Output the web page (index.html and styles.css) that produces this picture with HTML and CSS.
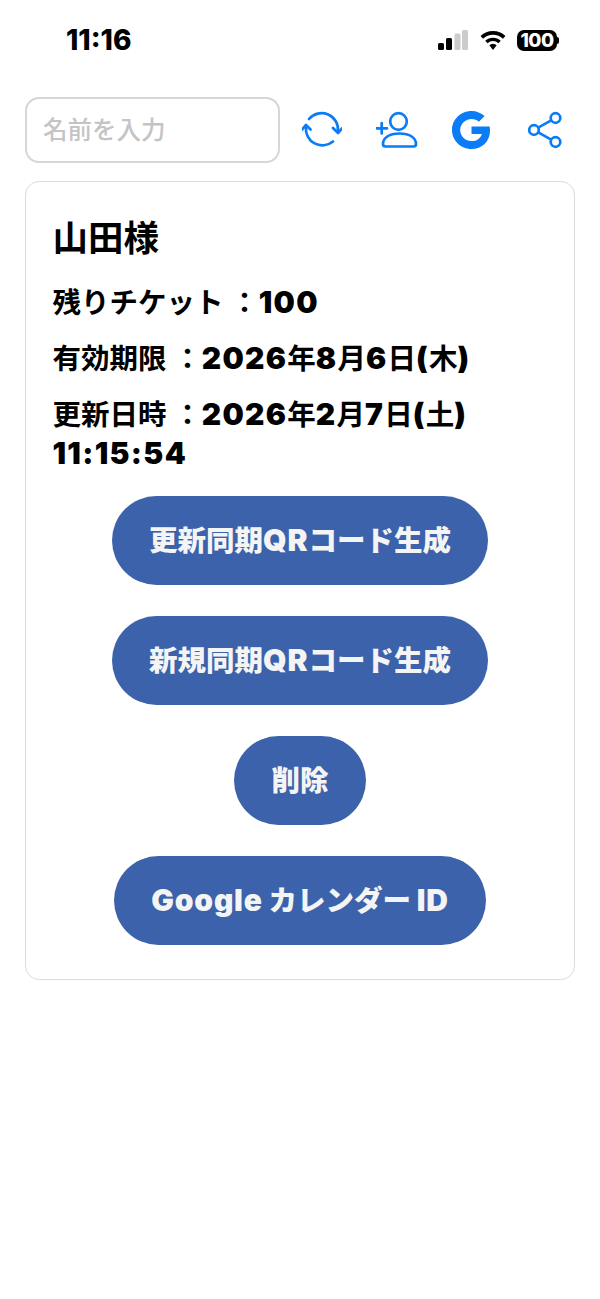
FILE: index.html
```html
<!DOCTYPE html>
<html lang="ja">
<head>
    <meta charset="UTF-8">
    <meta name="viewport" content="width=device-width, initial-scale=1.0">
    <title>チケット</title>
    <link rel="stylesheet" href="styles.css">
</head>
<body>
    <div class="status-bar">
        <span class="time">11:16</span>
        <div class="status-icons">
            <svg width="30" height="20" viewBox="0 0 30 20">
                <rect x="0" y="13" width="6" height="7" rx="1.5" fill="#000"/>
                <rect x="8" y="8" width="6" height="12" rx="1.5" fill="#000"/>
                <rect x="16.500" y="3.500" width="6" height="16.500" rx="1.500" fill="#ccc"/>
                <rect x="24" y="0" width="6" height="20" rx="1.500" fill="#ccc"/>
            </svg>
            <svg width="26" height="20" viewBox="0 0 26 20">
                <path d="M1.800 7.400a16 16 0 0 1 22.400 0" fill="none" stroke="#000" stroke-width="3.600"/>
                <path d="M6.400 12a9.500 9.500 0 0 1 13.200 0" fill="none" stroke="#000" stroke-width="3.400"/>
                <path d="M9.300 15.200a5.300 5.300 0 0 1 7.400 0L13 20z" fill="#000"/>
            </svg>
            <div class="battery"><span class="battery-level">100</span><span class="battery-cap"></span></div>
        </div>
    </div>

    <div class="toolbar">
        <input class="name-input" type="text" placeholder="名前を入力">
        <div class="tool-icons">
            <svg width="40" height="42" viewBox="5 4 40 42" fill="none" stroke="#0a7cf5" stroke-width="2.700" stroke-linecap="round" stroke-linejoin="round">
                <path d="M12 14A16.500 16.500 0 0 1 41 26.500"/>
                <path d="M9 22A16.500 16.500 0 0 0 36 36.500"/>
                <path d="M36 23l5 5 4.500-5"/>
                <path d="M5 24.500l4-4.500 4.500 4.500"/>
            </svg>
            <svg width="42" height="40" viewBox="5 4 42 40" fill="none" stroke="#0a7cf5" stroke-width="2.700" stroke-linecap="round" stroke-linejoin="round">
                <circle cx="27.500" cy="15.500" r="8.300"/>
                <path d="M12 38c0-6 6-10.500 16.500-10.500S45 32 45 38c0 1.500-1 2.500-2.500 2.500h-28C13 40.500 12 39.500 12 38z"/>
                <path d="M5.500 22.300h10.500M10.700 17v10.500"/>
            </svg>
            <svg width="38" height="38" viewBox="0 0 38 38">
                <path fill="#0a7cf5" d="M37.600 15.500H19.500v7.400h10.300c-1.200 4.600-5.300 7.200-10.300 7.200-6.300 0-11.300-5-11.300-11.100S13.200 7.900 19.500 7.900c2.900 0 5.400 1 7.400 2.800l5.700-5.600C29.100 2 24.700 0 19.500 0 8.800 0 0 8.500 0 19s8.800 19 19.500 19C30 38 38 30.500 38 19.500c0-1.400-.1-2.700-.4-4z"/>
            </svg>
            <svg class="icon-share" width="34" height="38" viewBox="0 0 34 38" fill="none" stroke="#0a7cf5" stroke-width="2.700">
                <circle cx="27.500" cy="7" r="4.800"/>
                <circle cx="6" cy="19" r="4.800"/>
                <circle cx="27.500" cy="31" r="4.800"/>
                <path d="M10.200 16.600l13-7.200M10.200 21.400l13 7.200"/>
            </svg>
        </div>
    </div>

    <div class="card">
        <h2 class="customer">山田様</h2>
        <p class="info">残りチケット ：<span class="latin">100</span></p>
        <p class="info">有効期限 ：<span class="latin">2026</span>年<span class="latin">8</span>月<span class="latin">6</span>日<span class="latin">(</span>木<span class="latin">)</span></p>
        <p class="info">更新日時 ：<span class="latin">2026</span>年<span class="latin">2</span>月<span class="latin">7</span>日<span class="latin">(</span>土<span class="latin">)</span> <span class="latin">11:15:54</span></p>
        <div class="actions">
            <button class="btn">更新同期<span class="latin">QR</span>コード生成</button>
            <button class="btn">新規同期<span class="latin">QR</span>コード生成</button>
            <button class="btn">削除</button>
            <button class="btn"><span class="latin">Google</span> カレンダー <span class="latin">ID</span></button>
        </div>
    </div>
</body>
</html>
```

FILE: styles.css
```css
* {
    box-sizing: border-box;
}
body {
    margin: 0;
    background: #fff;
    color: #000;
    font-family: Inter, "Noto Sans CJK JP", sans-serif;
}
.status-bar {
    display: flex;
    justify-content: space-between;
    align-items: center;
    height: 97px;
    padding: 0 41px 17px 66px;
}
.time {
    font-size: 28px;
    font-weight: 800;
}
.status-icons {
    display: flex;
    align-items: center;
    gap: 11.500px;
}
.battery {
    display: flex;
    align-items: center;
}
.battery-level {
    width: 40px;
    height: 21px;
    border-radius: 7px;
    background: #000;
    color: #fff;
    font-size: 19px;
    font-weight: 800;
    letter-spacing: -0.5px;
    line-height: 21px;
    text-align: center;
}
.battery-cap {
    width: 2px;
    height: 7px;
    border-radius: 0 2px 2px 0;
    background: #000;
}
.toolbar {
    display: flex;
    align-items: center;
    justify-content: space-between;
    padding: 0 38px 0 25px;
}
.name-input {
    width: 255px;
    height: 66px;
    padding: 0 16px;
    border: 2px solid #d6d6d6;
    border-radius: 14px;
    font-family: inherit;
    font-size: 24.500px;
    font-weight: 500;
}
.name-input::placeholder {
    color: #c4c4c4;
}
.tool-icons {
    display: flex;
    align-items: center;
    gap: 34px;
}
.icon-share {
    margin-left: 4px;
}
.card {
    margin: 18px 25px 0;
    padding: 35px 26.500px;
    height: 799px;
    border: 1.500px solid #dcdcdc;
    border-radius: 14px;
}
.customer {
    margin: 0 0 22px;
    font-size: 35.500px;
    font-weight: 700;
    line-height: 44px;
}
.info {
    margin: 0 0 17px;
    font-size: 28.500px;
    font-weight: 700;
    line-height: 38px;
}
.latin {
    font-size: 30px;
    font-weight: 900;
    letter-spacing: 1.300px;
}
.actions {
    display: flex;
    flex-direction: column;
    align-items: center;
    gap: 31px;
    margin-top: 23px;
}
.btn {
    height: 89px;
    padding: 0 37.500px 4px;
    border: none;
    border-radius: 45px;
    background: #3b62aa;
    color: #f4f4f4;
    font-family: inherit;
    font-size: 28.500px;
    font-weight: 900;
}
.btn .latin {
    letter-spacing: 0.800px;
}
```
